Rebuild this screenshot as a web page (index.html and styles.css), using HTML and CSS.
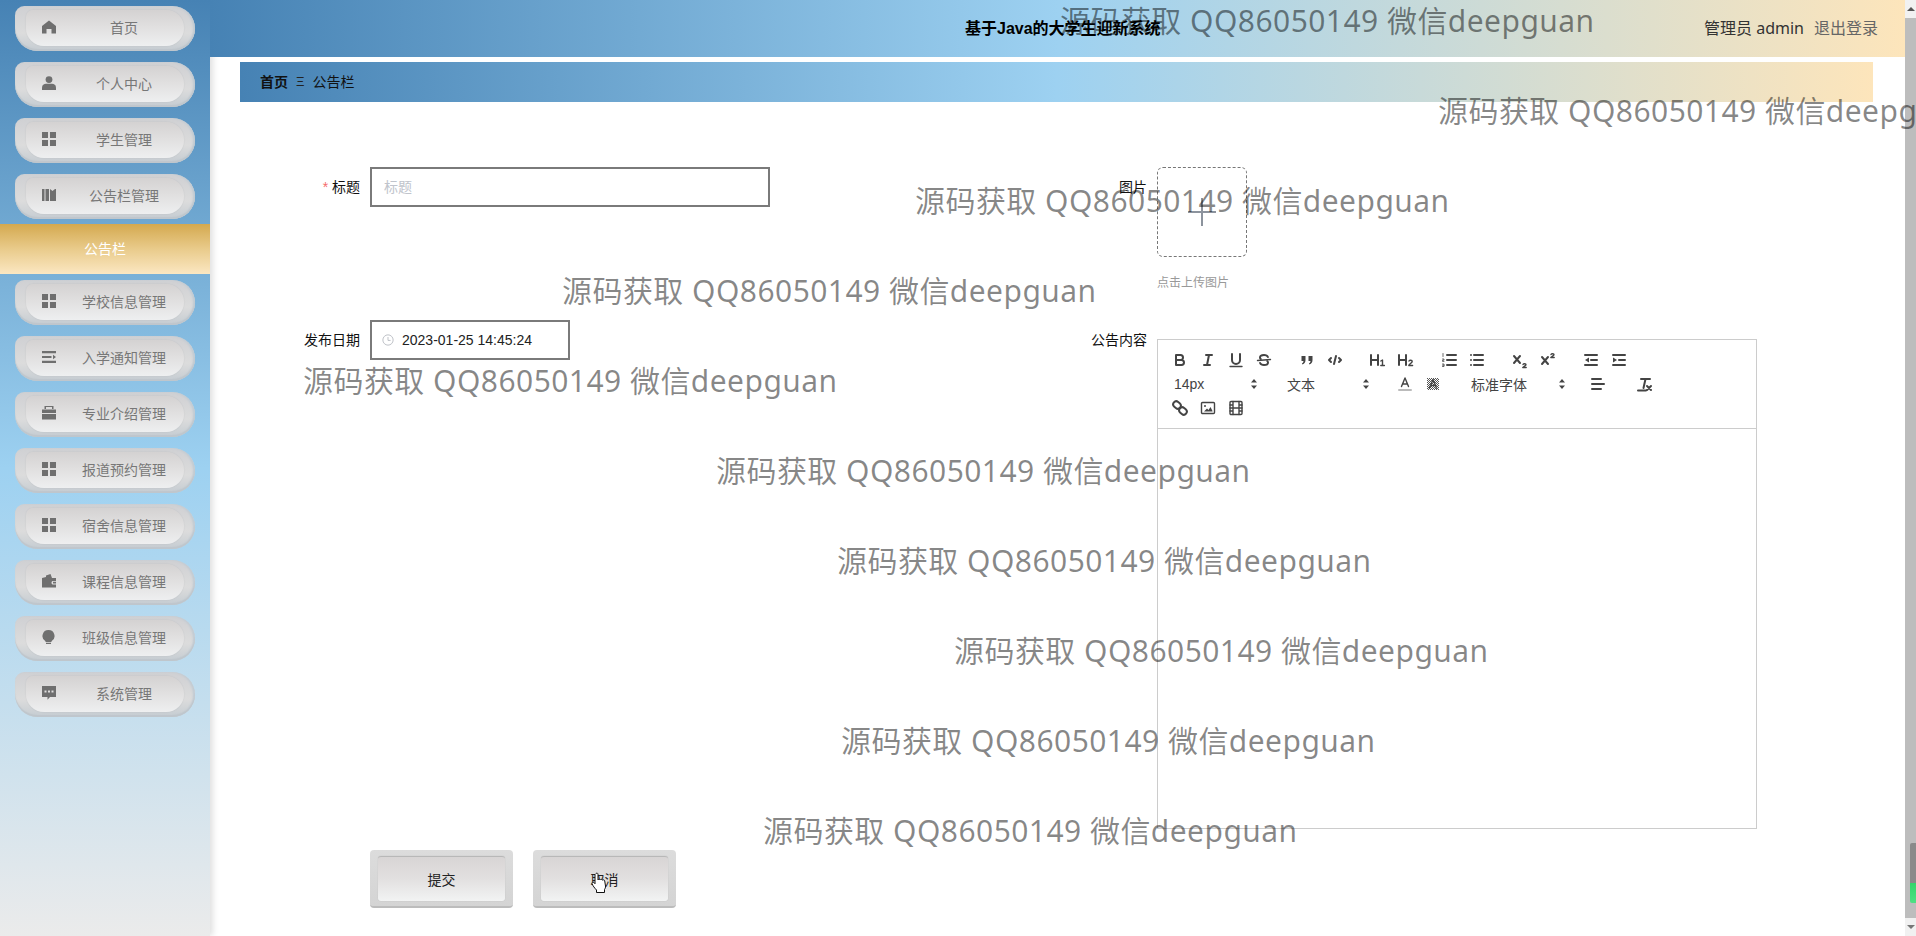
FILE: index.html
```html
<!DOCTYPE html>
<html lang="zh-CN">
<head>
  <meta charset="UTF-8">
  <title>基于Java的大学生迎新系统</title>
  <link rel="stylesheet" href="styles.css">
</head>
<body>

<!-- Left menu -->
<aside class="sidebar">
  <a class="nav-item"><span class="nav-inner"><svg class="nav-icon" viewBox="0 0 14 14"><path d="M7 0.500 14 6v7.500H9.500V9h-5v4.500H0V6z"/></svg><span class="nav-text">首页</span></span></a>
  <a class="nav-item"><span class="nav-inner"><svg class="nav-icon" viewBox="0 0 14 14"><circle cx="7" cy="3.600" r="3.400"/><path d="M0 14v-2.500C0 9 2 7.800 4 7.800h6c2 0 4 1.200 4 3.700V14z"/></svg><span class="nav-text">个人中心</span></span></a>
  <a class="nav-item"><span class="nav-inner"><svg class="nav-icon" viewBox="0 0 14 14"><path d="M0 0h6v6H0zM8 0h6v6H8zM0 8h6v6H0zM8 8h6v6H8z"/></svg><span class="nav-text">学生管理</span></span></a>
  <a class="nav-item"><span class="nav-inner"><svg class="nav-icon" viewBox="0 0 14 14"><path d="M0 1h2.500v12H0zM3.500 1H7v12H3.500zM8 1l2.500 2L13 1h1v12H8z"/></svg><span class="nav-text">公告栏管理</span></span></a>
  <a class="nav-sub">公告栏</a>
  <a class="nav-item"><span class="nav-inner"><svg class="nav-icon" viewBox="0 0 14 14"><path d="M0 0h6v6H0zM8 0h6v6H8zM0 8h6v6H0zM8 8h6v6H8z"/></svg><span class="nav-text">学校信息管理</span></span></a>
  <a class="nav-item"><span class="nav-inner"><svg class="nav-icon" viewBox="0 0 14 14"><path d="M0 1h14v2.200H0zM0 5.900h9.500v2.200H0zM11 4.800l3 2.200-3 2.200zM0 10.800h14V13H0z"/></svg><span class="nav-text">入学通知管理</span></span></a>
  <a class="nav-item"><span class="nav-inner"><svg class="nav-icon" viewBox="0 0 14 14"><path d="M4 3V1h6v2h1.500V0h-9v3zM0 3.500h14V7H0zM0 8h14v5.500H0z"/></svg><span class="nav-text">专业介绍管理</span></span></a>
  <a class="nav-item"><span class="nav-inner"><svg class="nav-icon" viewBox="0 0 14 14"><path d="M0 0h6v6H0zM8 0h6v6H8zM0 8h6v6H0zM8 8h6v6H8z"/></svg><span class="nav-text">报道预约管理</span></span></a>
  <a class="nav-item"><span class="nav-inner"><svg class="nav-icon" viewBox="0 0 14 14"><path d="M0 0h6v6H0zM8 0h6v6H8zM0 8h6v6H0zM8 8h6v6H8z"/></svg><span class="nav-text">宿舍信息管理</span></span></a>
  <a class="nav-item"><span class="nav-inner"><svg class="nav-icon" viewBox="0 0 14 14"><path d="M0 4 4 3V1.500L8.500 0 10 4h4v3h-3.500a2 2 0 0 0 0 3.500H14V13.500H0zM11 7.800h3v1.600h-3z"/></svg><span class="nav-text">课程信息管理</span></span></a>
  <a class="nav-item"><span class="nav-inner"><svg class="nav-icon" viewBox="0 0 14 14"><path d="M6.500 0a6 6 0 0 1 3 11.200V12h-6v-.8A6 6 0 0 1 6.500 0zM4 12.800h5V14H4z"/></svg><span class="nav-text">班级信息管理</span></span></a>
  <a class="nav-item"><span class="nav-inner"><svg class="nav-icon" viewBox="0 0 14 14"><path fill-rule="evenodd" d="M0 0h14v11H8l-2.500 2.800V11H0zM2.500 4.500v2h2v-2zM6 4.500v2h2v-2zM9.500 4.500v2h2v-2z"/></svg><span class="nav-text">系统管理</span></span></a>
</aside>

<div class="main">
  <header class="topbar">
    <div class="topbar-title">基于Java的大学生迎新系统</div>
    <div class="topbar-user">管理员 admin</div>
    <a class="topbar-logout">退出登录</a>
  </header>

  <div class="breadcrumb">
    <b>首页</b>
    <span class="breadcrumb-sep">Ξ</span>
    <span>公告栏</span>
  </div>

  <form class="form">
    <div class="field field-title">
      <label class="field-label"><i>*</i> 标题</label>
      <input class="text-input title-input" type="text" placeholder="标题">
    </div>

    <div class="field field-image">
      <label class="field-label image-label">图片</label>
      <div>
        <div class="upload-box">
          <svg class="upload-plus" viewBox="0 0 28 28"><path d="M0 14h28M14 0v28"/></svg>
        </div>
        <div class="upload-hint">点击上传图片</div>
      </div>
    </div>

    <div class="field">
      <label class="field-label">发布日期</label>
      <div class="date-input">
        <svg class="date-icon" viewBox="0 0 14 14"><circle cx="7" cy="7" r="6"/><path d="M7 3.500V7.500H10"/></svg>
        <span>2023-01-25 14:45:24</span>
      </div>
    </div>

    <div class="field">
      <label class="field-label">公告内容</label>
      <div class="editor">
        <div class="toolbar">
          <!-- first row -->
          <div class="tool-row">
            <span class="tool-group">
              <svg class="tool" viewBox="0 0 18 18"><path d="M5 4h4.500a2.500 2.500 0 0 1 0 5H5zM5 9h5.500a2.500 2.500 0 0 1 0 5H5z"/></svg>
              <svg class="tool" viewBox="0 0 18 18"><path d="M7 4h6M5 14h6M8 14l2-10"/></svg>
              <svg class="tool" viewBox="0 0 18 18"><path d="M5 3v6a4 4 0 0 0 8 0V3"/><path class="thin" d="M3 15.500h12"/></svg>
              <svg class="tool" viewBox="0 0 18 18"><path class="thin" d="M15.500 8.500 2.500 9.500"/><path d="M12.900 6c-.4-1-2-2-3.900-2-2.200 0-4 1.100-4 2.500 0 .7.300 1.200.8 1.500M5.100 12c.4 1 2 2 3.900 2 2.200 0 4-1.100 4-2.500 0-.7-.3-1.200-.8-1.500"/></svg>
            </span>
            <span class="tool-group">
              <svg class="tool" viewBox="0 0 18 18"><path class="solid" d="M3.500 5h4v4c0 2-1 3.500-3 4.500l-.6-1c1-.6 1.500-1.300 1.600-2.500h-2zM10.500 5h4v4c0 2-1 3.500-3 4.500l-.6-1c1-.6 1.500-1.300 1.600-2.500h-2z"/></svg>
              <svg class="tool" viewBox="0 0 18 18"><path d="M5 7 3 9l2 2M13 7l2 2-2 2M10 5 8 13"/></svg>
            </span>
            <span class="tool-group">
              <svg class="tool" viewBox="0 0 18 18"><path d="M2 4v10M9 4v10M2 9h7"/><path class="thin" d="M11.800 10l1.700-1v5.500M11.800 14.500h3.600"/></svg>
              <svg class="tool" viewBox="0 0 18 18"><path d="M2 4v10M9 4v10M2 9h7"/><path class="thin" d="M12 10c.5-1 3.200-1.200 3.200.5 0 1.500-3.200 2.500-3.400 4h3.800"/></svg>
            </span>
            <span class="tool-group">
              <svg class="tool" viewBox="0 0 18 18"><path d="M7 4h9M7 9h9M7 14h9"/><path class="hair" d="M3 2.500v3M2.500 8h1.500v1.200H2.500v1.200H4M2.500 13h1.500v2.500H2.500M2.500 14.200H4"/></svg>
              <svg class="tool" viewBox="0 0 18 18"><path d="M6 4h9M6 9h9M6 14h9M3 4h0M3 9h0M3 14h0"/></svg>
            </span>
            <span class="tool-group">
              <svg class="tool" viewBox="0 0 18 18"><path d="M3 5l6 7M9 5l-6 7"/><path class="thin" d="M12 13.500c.5-1 3-1 3 .2 0 1.200-3 1.800-3.200 2.800h3.400"/></svg>
              <svg class="tool" viewBox="0 0 18 18"><path d="M3 6l6 7M9 6l-6 7"/><path class="thin" d="M12 3.500c.5-1 3-1 3 .2 0 1.200-3 1.800-3.200 2.800h3.400"/></svg>
            </span>
            <span class="tool-group">
              <svg class="tool" viewBox="0 0 18 18"><path d="M3 4h12M3 14h12M9 9h6"/><path class="solid" d="M7 6.500v5L3 9z"/></svg>
              <svg class="tool" viewBox="0 0 18 18"><path d="M3 4h12M3 14h12M9 9h6"/><path class="solid" d="M3 6.500v5L7 9z"/></svg>
            </span>
          </div>
          <!-- second row -->
          <div class="tool-row">
            <span class="picker picker-size">14px<svg class="arrows" viewBox="0 0 8 12"><path d="M4 1 7 4.500H1zM4 11 7 7.500H1z"/></svg></span>
            <span class="picker picker-header">文本<svg class="arrows" viewBox="0 0 8 12"><path d="M4 1 7 4.500H1zM4 11 7 7.500H1z"/></svg></span>
            <svg class="tool" viewBox="0 0 18 18"><path class="thin" d="M5.500 11.500 9 3l3.500 8.500M6.500 9h5"/><path class="color-bar" d="M3 15h12"/></svg>
            <svg class="tool tool-last-color" viewBox="0 0 18 18"><defs><pattern id="dots" width="2" height="2" patternUnits="userSpaceOnUse"><rect width="1" height="1" fill="#555" stroke="none"/><rect x="1" y="1" width="1" height="1" fill="#555" stroke="none"/></pattern></defs><rect x="3" y="3" width="12" height="12" fill="url(#dots)" stroke="none"/><path class="thin" d="M5.500 13 9 4.500l3.500 8.500M6.500 10.500h5"/></svg>
            <span class="picker picker-font">标准字体<svg class="arrows" viewBox="0 0 8 12"><path d="M4 1 7 4.500H1zM4 11 7 7.500H1z"/></svg></span>
            <svg class="tool tool-align" viewBox="0 0 18 18"><path d="M3 4h9M3 9h12M3 14h9"/></svg>
            <svg class="tool" viewBox="0 0 18 18"><path d="M6 4h9M10.500 4 8.500 13M3 15.500h8"/><path d="M12 11l4 4M16 11l-4 4"/></svg>
          </div>
          <!-- third row -->
          <div class="tool-row">
            <svg class="tool" viewBox="0 0 18 18"><rect x="2" y="3" width="8" height="6" rx="3" transform="rotate(40 6 6)"/><rect x="8" y="9" width="8" height="6" rx="3" transform="rotate(40 12 12)"/></svg>
            <svg class="tool" viewBox="0 0 18 18"><rect class="thin" x="2.500" y="3.500" width="13" height="11" rx="1"/><circle class="solid" cx="6" cy="7" r="1"/><path class="solid" d="M5 12.500 8 9.500l1.500 1.500 2-3 2 4v.5z"/></svg>
            <svg class="tool" viewBox="0 0 18 18"><rect class="thin" x="3" y="2.500" width="12" height="13" rx="1"/><path class="thin" d="M6 2.500v13M12 2.500v13M3 9h12M3 6h3M3 12h3M12 6h3M12 12h3"/></svg>
          </div>
        </div>
        <div class="editor-body"></div>
      </div>
    </div>

    <div class="actions">
      <button class="btn" type="button"><span class="btn-inner">提交</span></button>
      <button class="btn" type="button"><span class="btn-inner">取消</span></button>
    </div>
  </form>
</div>

<!-- Page scrollbar -->
<div class="scrollbar">
  <span class="scroll-arrow"><i class="arrow-up"></i></span>
  <div class="scroll-track"><div class="scroll-thumb"></div></div>
  <span class="scroll-arrow"><i class="arrow-down"></i></span>
</div>

<!-- Watermark layer, free positions -->
<div class="watermarks">
  <span style="left:1060px;top:0px">源码获取 QQ86050149 微信deepguan</span>
  <span style="left:1438px;top:90px">源码获取 QQ86050149 微信deepguan</span>
  <span style="left:915px;top:180px">源码获取 QQ86050149 微信deepguan</span>
  <span style="left:562px;top:270px">源码获取 QQ86050149 微信deepguan</span>
  <span style="left:303px;top:360px">源码获取 QQ86050149 微信deepguan</span>
  <span style="left:716px;top:450px">源码获取 QQ86050149 微信deepguan</span>
  <span style="left:837px;top:540px">源码获取 QQ86050149 微信deepguan</span>
  <span style="left:954px;top:630px">源码获取 QQ86050149 微信deepguan</span>
  <span style="left:841px;top:720px">源码获取 QQ86050149 微信deepguan</span>
  <span style="left:763px;top:810px">源码获取 QQ86050149 微信deepguan</span>
</div>

<!-- Mouse pointer caught in the screenshot -->
<svg class="hand-cursor" viewBox="0 0 18 22"><path d="M5 1.500c1-.8 2-.3 2 1V8c.3-1 2-1.100 2.300 0 .4-.9 1.900-.9 2.200.2.500-.7 2-.5 2.200.6l.8 5.200c.2 1.500-.4 2.500-1 3.500v3H5.500v-2.500C4 16.500 1.500 13.500 1 11.500c-.2-1 1-1.800 2-1l1 1.200V2.500z"/></svg>

</body>
</html>
```

FILE: styles.css
```css
* {
  box-sizing: border-box;
}
html, body {
  height: 100%;
}
body {
  margin: 0;
  display: flex;
  overflow: hidden;
  position: relative;
  background: #fff;
  color: #000;
  font-family: "Liberation Sans", "Noto Sans CJK SC", sans-serif;
  font-size: 14px;
}

/* sidebar */
.sidebar {
  width: 210px;
  flex: none;
  padding-top: 6px;
  background: linear-gradient(180deg, #4682b4 0%, #9dd1f1 50%, #ebebeb 100%);
  box-shadow: 3px 0 6px rgba(0, 0, 0, .12);
}
.nav-item {
  display: block;
  width: 180px;
  height: 45px;
  margin: 0 0 11px 15px;
  padding: 4px 11px 5px 11px;
  border-radius: 10px 24px 24px 24px;
  background: linear-gradient(180deg, #cfd0d3 0%, #dcdcdc 60%, #c5ccd2 100%);
  box-shadow: inset 0 -2px 1px #bfc6cc, inset -2px 0 2px #c2cbd3;
}
.nav-inner {
  display: flex;
  align-items: center;
  height: 100%;
  padding: 0 0 2px 16px;
  border-radius: 8px 20px 20px 20px;
  background: linear-gradient(180deg, #d4d2d2 0%, #e0dfdf 45%, #eeeff0 100%);
  box-shadow: 0 0 2px rgba(0, 0, 0, .08);
  color: #777;
}
.nav-icon {
  width: 14px;
  height: 14px;
  flex: none;
  fill: #6f6f6f;
}
.nav-text {
  flex: 1;
  margin-left: 8px;
  text-align: center;
}
.nav-sub {
  display: block;
  height: 50px;
  margin: -6px 0 6px;
  line-height: 50px;
  text-align: center;
  color: #fff;
  background: linear-gradient(180deg, #d4a94f 0%, #e9cb8b 50%, #fbe7c2 100%);
}

/* main column */
.main {
  flex: 1;
  min-width: 0;
  display: flex;
  flex-direction: column;
}
.topbar {
  height: 57px;
  flex: none;
  display: flex;
  align-items: center;
  padding: 0 27px 4px 0;
  background: linear-gradient(90deg, #4682b4 0%, #9dd1f1 50%, #fde5bb 100%);
  font-size: 16px;
}
.topbar-title {
  margin-left: 755px;
  font-weight: bold;
  white-space: nowrap;
}
.topbar-user {
  margin-left: auto;
  font-family: "Noto Sans", "Noto Sans CJK SC", sans-serif;
  color: #333;
}
.topbar-logout {
  margin-left: 10px;
  color: #666;
}
.breadcrumb {
  height: 40px;
  flex: none;
  margin: 5px 32px 0 30px;
  padding: 0 0 2px 20px;
  display: flex;
  align-items: center;
  background: linear-gradient(90deg, #4682b4 0%, #9dd1f1 50%, #fde5bb 100%);
  color: #111;
}
.breadcrumb-sep {
  margin: 0 8px;
  font-size: 13px;
  color: #222;
}

/* form */
.form {
  display: grid;
  grid-template-columns: 787px 1fr;
  grid-template-rows: 153px auto;
  padding: 65px 0 0 50px;
}
.field {
  display: flex;
  align-items: flex-start;
}
.field-label {
  width: 100px;
  flex: none;
  margin-right: 10px;
  line-height: 40px;
  text-align: right;
  color: #111;
}
.field-label i {
  font-style: normal;
  color: #f56c6c;
}
.image-label {
  line-height: 40px;
}
.text-input {
  display: block;
  height: 40px;
  border: 2px solid #7a7a7a;
  padding: 0 12px;
  font: inherit;
  outline: none;
}
.text-input::placeholder {
  color: #c0c4cc;
}
.title-input {
  width: 400px;
}
.upload-box {
  width: 90px;
  height: 90px;
  display: flex;
  align-items: center;
  justify-content: center;
  border: 1px dashed #777;
  border-radius: 6px;
}
.upload-plus {
  width: 28px;
  height: 28px;
  stroke: #8c939d;
  stroke-width: 2;
  fill: none;
}
.upload-hint {
  margin-top: 16px;
  font-size: 12px;
  line-height: 20px;
  color: #999;
}
.date-input {
  width: 200px;
  height: 40px;
  display: flex;
  align-items: center;
  padding-left: 10px;
  border: 2px solid #7a7a7a;
  color: #222;
}
.date-icon {
  width: 12px;
  height: 12px;
  margin-right: 8px;
  fill: none;
  stroke: #b4b8bf;
  stroke-width: 1;
}

/* rich text editor */
.editor {
  width: 600px;
  margin-top: 19px;
  border: 1px solid #ccc;
}
.toolbar {
  height: 89px;
  padding: 8px 8px 0;
  border-bottom: 1px solid #ccc;
}
.tool-row {
  display: flex;
  align-items: center;
  height: 24px;
}
.tool-group {
  display: flex;
  margin-right: 15px;
}
.tool {
  width: 28px;
  height: 18px;
  flex: none;
  fill: none;
  stroke: #444;
  stroke-width: 2;
  stroke-linecap: round;
  stroke-linejoin: round;
}
.tool .thin {
  stroke-width: 1.400;
}
.tool .hair {
  stroke-width: .8;
}
.tool .solid {
  fill: #444;
  stroke: none;
}
.tool .color-bar {
  stroke: #bbb;
}
.tool-last-color {
  margin-right: 16px;
}
.tool-align {
  margin-left: 8px;
  margin-right: 18px;
}
.picker {
  display: flex;
  align-items: center;
  justify-content: space-between;
  flex: none;
  padding: 0 10px 0 8px;
  color: #444;
  font-size: 14px;
  font-weight: 400;
}
.picker-size {
  width: 102px;
  margin-right: 11px;
  font-family: "Liberation Sans", sans-serif;
}
.picker-header {
  width: 101px;
  margin-right: 11px;
}
.picker-font {
  width: 113px;
}
.arrows {
  width: 8px;
  height: 12px;
  fill: #444;
}
.editor-body {
  height: 399px;
}

/* buttons */
.actions {
  grid-column: 1 / -1;
  display: flex;
  gap: 20px;
  margin: 21px 0 0 110px;
}
.btn {
  width: 143px;
  height: 58px;
  border: 0;
  border-bottom: 2px solid #bcbcbc;
  border-radius: 4px;
  padding: 6px 8px 5px;
  font: inherit;
  color: #222;
  background: linear-gradient(180deg, #dcdcdc 0%, #d4d4d4 100%);
}
.btn-inner {
  display: flex;
  align-items: center;
  justify-content: center;
  height: 100%;
  border-top: 1px solid #b8b8b8;
  border-radius: 3px;
  background: linear-gradient(180deg, #d8d5d5 0%, #e2e0e0 50%, #f2f3f3 100%);
  box-shadow: 0 0 1px rgba(0, 0, 0, .2);
}

/* scrollbar */
.scrollbar {
  width: 11px;
  flex: none;
  display: flex;
  flex-direction: column;
  background: #f1f1f1;
}
.scroll-arrow {
  height: 18px;
  flex: none;
  display: flex;
  align-items: center;
  justify-content: center;
}
.arrow-up {
  border: 4px solid transparent;
  border-top: 0;
  border-bottom: 4px solid #555;
}
.arrow-down {
  border: 4px solid transparent;
  border-bottom: 0;
  border-top: 4px solid #777;
}
.scroll-track {
  flex: 1;
  padding: 825px 0 0 5px;
  background: #bdbdbd;
}
.scroll-thumb {
  height: 60px;
  border-radius: 2px 0 0 2px;
  background: linear-gradient(180deg, #8a8a8a 0%, #8a8a8a 66%, #35d56b 67%, #4fe084 100%);
}

/* overlays */
.watermarks {
  position: absolute;
  inset: 0;
  overflow: hidden;
  pointer-events: none;
}
.watermarks span {
  position: absolute;
  font-family: "Noto Sans", "Noto Sans CJK SC", sans-serif;
  font-size: 30px;
  letter-spacing: .45px;
  line-height: 42px;
  white-space: nowrap;
  color: rgba(0, 0, 0, .47);
}
.hand-cursor {
  position: absolute;
  left: 591px;
  top: 872px;
  width: 18px;
  height: 22px;
  fill: #fff;
  stroke: #111;
  stroke-width: 1;
}
```
